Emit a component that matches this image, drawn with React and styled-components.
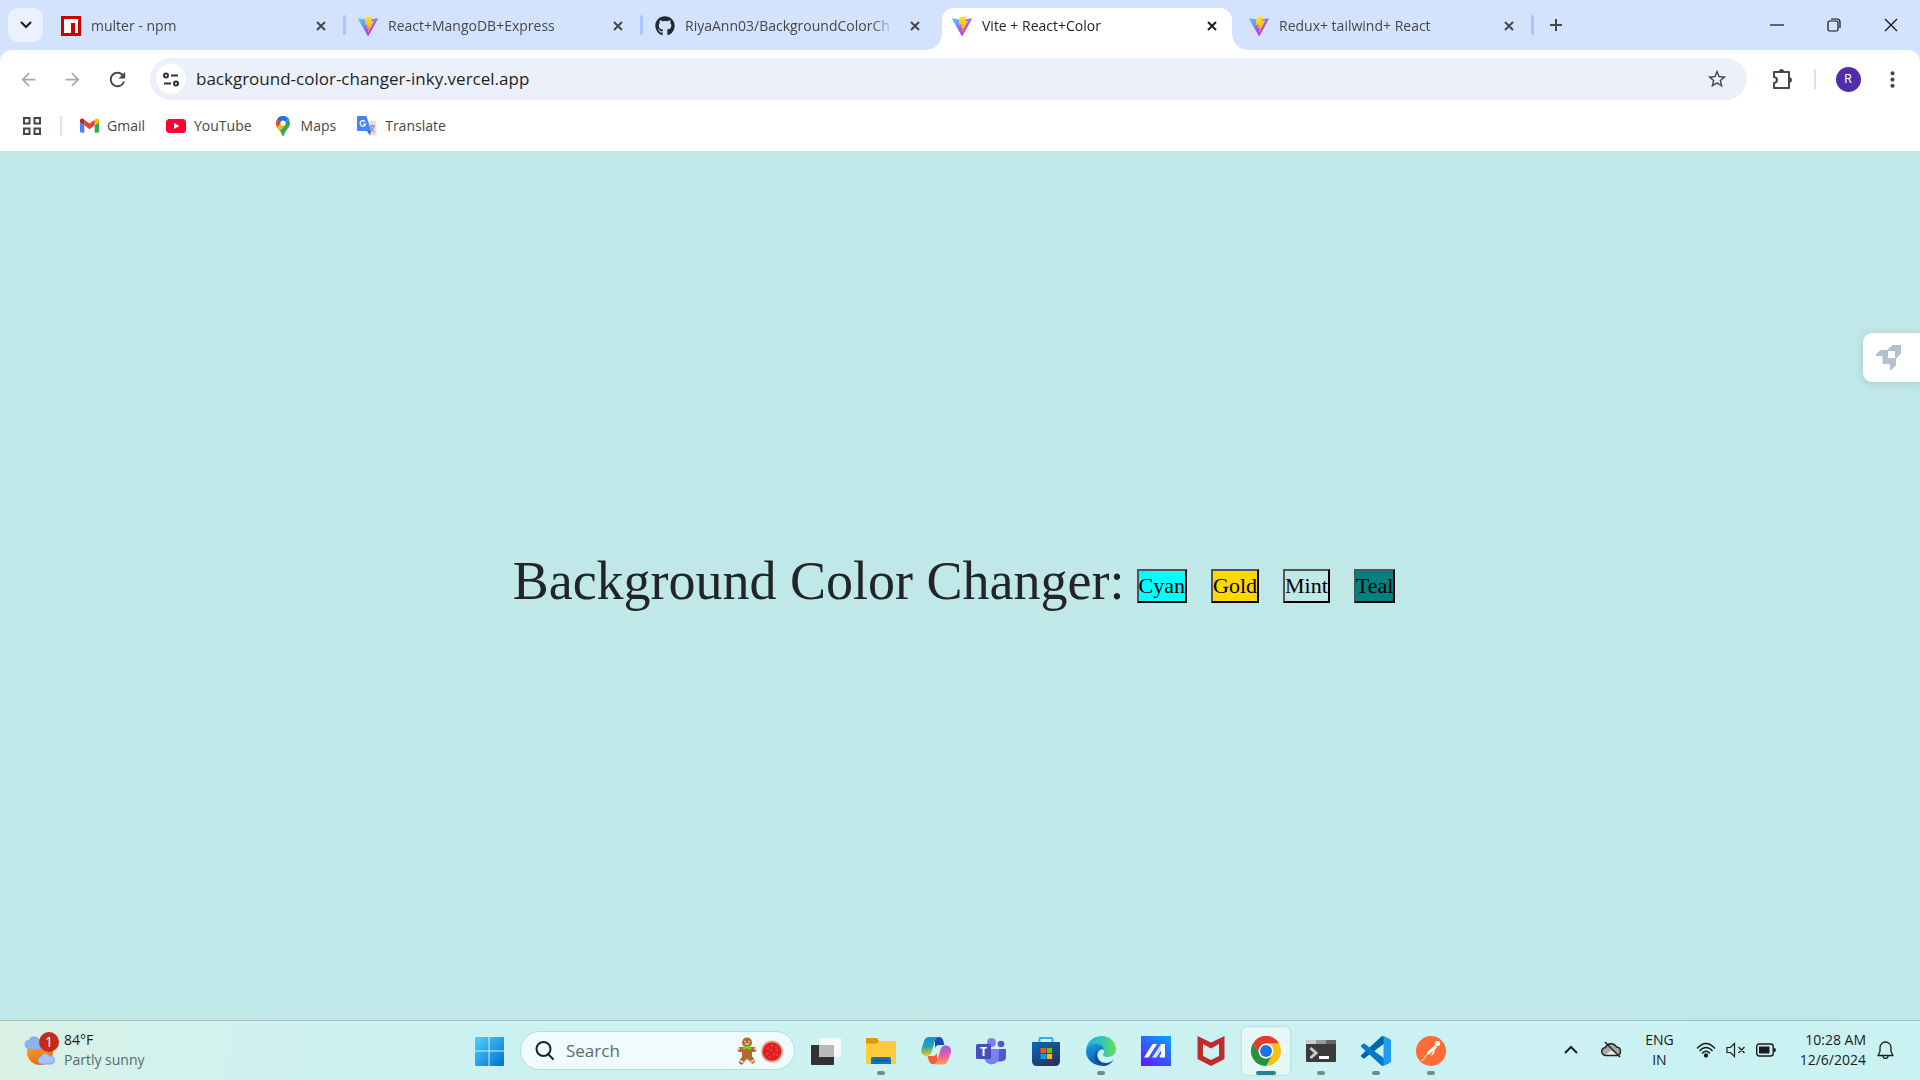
import React, { useId, useState } from "react";
import styled, { createGlobalStyle } from "styled-components";
import {
  MdArrowBack, MdArrowForward, MdRefresh, MdStarBorder, MdMoreVert,
} from "react-icons/md";
import { FaGithub } from "react-icons/fa";

const ui = `"Open Sans", "Noto Sans", sans-serif`;

const GlobalStyle = createGlobalStyle`
  *, *::before, *::after { box-sizing: border-box; }
  body { margin: 0; font-family: ${ui}; }
  button, input { font: inherit; color: inherit; }
  svg { display: block; flex: none; }
`;

const Screen = styled.div`
  display: flex;
  flex-direction: column;
  min-height: 100vh;
`;

/* ---------- browser frame ---------- */
const Browser = styled.header`
  background: #d3e3fd;
`;
const TabStrip = styled.div`
  display: flex;
  align-items: stretch;
  height: 50px;
  padding-left: 8px;
`;
const TabSearch = styled.button`
  width: 35px;
  height: 34px;
  margin: 8px 8px 0 0;
  border: 0;
  border-radius: 10px;
  background: #ebf1fe;
  display: grid;
  place-items: center;
  padding: 0;
`;
const Tab = styled.div`
  position: relative;
  display: flex;
  align-items: center;
  flex: 0 1 290px;
  min-width: 0;
  margin-top: 8px;
  padding: 0 10px 7px;
  gap: 10px;
  border-radius: 12px 12px 0 0;
  background: ${(p) => (p.$active ? "#fff" : "transparent")};
  color: ${(p) => (p.$active ? "#1f1f1f" : "#474747")};
  &::before, &::after {
    content: "";
    display: ${(p) => (p.$active ? "block" : "none")};
    position: absolute;
    bottom: 0;
    width: 15px;
    height: 15px;
  }
  &::before {
    right: 100%;
    background: radial-gradient(circle at 0 0, transparent 14px, #fff 15px);
  }
  &::after {
    left: 100%;
    background: radial-gradient(circle at 100% 0, transparent 14px, #fff 15px);
  }
`;
const TabTitle = styled.span`
  flex: 1;
  min-width: 0;
  overflow: hidden;
  white-space: nowrap;
  font-size: 14px;
  line-height: 20px;
  mask-image: linear-gradient(to right, #000 calc(100% - 24px), transparent);
`;
const Divider = styled.span`
  flex: none;
  align-self: center;
  width: 3px;
  height: 20px;
  margin: 0 2px;
  border-radius: 2px;
  background: ${(p) => (p.$hidden ? "transparent" : "#a8c7fa")};
`;
const IconButton = styled.button`
  flex: none;
  display: grid;
  place-items: center;
  width: ${(p) => p.$w || 20}px;
  height: ${(p) => p.$h || 20}px;
  padding: 0;
  border: 0;
  background: none;
  color: ${(p) => p.$color || "#474747"};
`;
const WindowControls = styled.div`
  display: flex;
  align-items: center;
  margin-left: auto;
`;
const Toolbar = styled.div`
  display: flex;
  align-items: center;
  height: 58px;
  padding: 0 6px;
  background: #fff;
  border-radius: 12px 12px 0 0;
`;
const Omnibox = styled.div`
  flex: 1;
  display: flex;
  align-items: center;
  height: 42px;
  margin: 0 13px 0 10px;
  padding: 0 18px 0 6px;
  border-radius: 21px;
  background: #ecf0fa;
`;
const SiteInfo = styled.button`
  display: grid;
  place-items: center;
  width: 30px;
  height: 30px;
  padding: 0;
  border: 0;
  border-radius: 50%;
  background: #fff;
`;
const Address = styled.input`
  flex: 1;
  min-width: 0;
  margin-left: 10px;
  padding: 0;
  border: 0;
  background: none;
  font-size: 17px;
  line-height: 24px;
  color: #1f1f1f;
`;
const ToolDivider = styled.span`
  width: 2px;
  height: 20px;
  background: #d3e3fd;
  margin: 0 ${(p) => p.$gap}px;
`;
const Avatar = styled.button`
  width: 25px;
  height: 25px;
  padding: 0;
  border: 0;
  border-radius: 50%;
  background: #512da8;
  color: #fff;
  font: 12px/25px Roboto, sans-serif;
`;
const Bookmarks = styled.nav`
  display: flex;
  align-items: center;
  height: 43px;
  padding: 0 22px 8px;
  background: #fff;
`;
const Bookmark = styled.a`
  display: flex;
  align-items: center;
  gap: 8px;
  margin-right: 21px;
  color: #474747;
  font-size: 14px;
  line-height: 20px;
  text-decoration: none;
`;

/* ---------- page ---------- */
const Page = styled.main`
  position: relative;
  flex: 1;
  display: flex;
  align-items: center;
  justify-content: center;
  background: ${(p) => p.$color};
  font-family: "Liberation Serif", serif;
`;
const Picker = styled.section`
  display: flex;
  align-items: center;
`;
const Heading = styled.h1`
  margin: 0;
  padding-bottom: 10px;
  font-size: 54px;
  line-height: 64px;
  font-weight: 400;
  color: #212529;
`;
const Swatch = styled.button`
  margin: 0 12px;
  padding: 0;
  border: 2px outset #000;
  background: ${(p) => p.$color};
  color: #000;
  font-size: 22px;
  line-height: 30px;
`;
const SideWidget = styled.button`
  position: absolute;
  right: 0;
  top: 182px;
  display: flex;
  align-items: center;
  width: 57px;
  height: 49px;
  padding: 0 13px;
  border: 0;
  border-radius: 9px 0 0 9px;
  background: #fff;
  box-shadow: 0 1px 8px rgba(60, 90, 110, 0.2);
`;

/* ---------- taskbar ---------- */
const Taskbar = styled.footer`
  display: grid;
  grid-template-columns: 1fr auto 1fr;
  align-items: center;
  height: 60px;
  border-top: 1px solid #a6bdc2;
  background: linear-gradient(100deg, #dbf1e4 0, #d2f2ec 160px, #cbf2f1 420px, #ccf1f2 70%, #caf2f2 100%);
  color: #1b1b1b;
`;
const Weather = styled.button`
  display: flex;
  align-items: center;
  gap: 4px;
  justify-self: start;
  margin-left: 24px;
  padding: 0 0 2px;
  border: 0;
  background: none;
  text-align: left;
`;
const SmallText = styled.span`
  display: block;
  font-size: 14px;
  line-height: 20px;
  white-space: nowrap;
  color: ${(p) => (p.$muted ? "#58696b" : "#1b1b1b")};
`;
const Apps = styled.div`
  display: flex;
  align-items: center;
  gap: 7px;
`;
const AppButton = styled.button`
  display: flex;
  flex-direction: column;
  align-items: center;
  justify-content: space-between;
  width: 48px;
  height: 48px;
  padding: 9px 0 0;
  border: 0;
  border-radius: 5px;
  background: ${(p) => (p.$active ? "#e6f7f8" : "none")};
  box-shadow: ${(p) => (p.$active ? "0 0 1px 1px rgba(120,170,170,0.2)" : "none")};
  &::after {
    content: "";
    width: ${(p) => (p.$active ? 20 : 8)}px;
    height: 4px;
    border-radius: 2px;
    background: ${(p) => (p.$active ? "#24848f" : p.$running ? "#76898b" : "transparent")};
  }
`;
const SearchBox = styled.label`
  display: flex;
  align-items: center;
  width: 275px;
  height: 39px;
  padding: 0 11px 0 14px;
  border: 1px solid #b5dcdc;
  border-radius: 20px;
  background: #effbfc;
`;
const SearchInput = styled.input`
  flex: 1;
  min-width: 0;
  margin-left: 12px;
  padding: 0;
  border: 0;
  background: none;
  font-size: 17px;
  line-height: 24px;
  &::placeholder { color: #5c6b6c; opacity: 1; }
`;
const Tray = styled.div`
  display: flex;
  align-items: center;
  justify-self: end;
  padding: 0 26px 2px 0;
`;
const TrayButton = styled.button`
  display: flex;
  align-items: center;
  gap: ${(p) => p.$gap || 0}px;
  margin-left: ${(p) => p.$before || 0}px;
  padding: 0;
  border: 0;
  background: none;
`;
const TrayText = styled(TrayButton)`
  display: block;
  text-align: ${(p) => p.$align};
`;

/* ---------- drawings ---------- */
const Vite = () => {
  const id = useId();
  return (
    <svg width="20" height="20" viewBox="0 0 256 257" aria-hidden="true">
      <defs>
        <linearGradient id={id + "a"} x1="0" x2=".58" y1=".08" y2=".79">
          <stop offset="0" stopColor="#41d1ff" /><stop offset="1" stopColor="#bd34fe" />
        </linearGradient>
        <linearGradient id={id + "b"} x1=".43" x2=".5" y1=".02" y2=".89">
          <stop offset="0" stopColor="#ffea83" /><stop offset=".08" stopColor="#ffdd35" /><stop offset="1" stopColor="#ffa800" />
        </linearGradient>
      </defs>
      <path fill={`url(#${id}a)`} d="M255.153 37.938L134.897 252.976c-2.483 4.44-8.862 4.466-11.382.048L.875 37.958c-2.746-4.814 1.371-10.646 6.827-9.67l120.385 21.517a6.537 6.537 0 0 0 2.322-.004l117.867-21.483c5.438-.991 9.574 4.796 6.877 9.62Z" />
      <path fill={`url(#${id}b)`} d="M185.432.063L96.44 17.501a3.268 3.268 0 0 0-2.634 3.014l-5.474 92.456a3.268 3.268 0 0 0 3.997 3.378l24.777-5.718c2.318-.535 4.413 1.507 3.936 3.838l-7.361 36.047c-.495 2.426 1.782 4.5 4.151 3.78l15.304-4.649c2.372-.72 4.652 1.36 4.15 3.788l-11.698 56.621c-.732 3.542 3.979 5.473 5.943 2.437l1.313-2.028l72.516-144.72c1.215-2.423-.88-5.186-3.54-4.672l-25.505 4.922c-2.396.462-4.435-1.77-3.759-4.114l16.646-57.705c.677-2.35-1.37-4.583-3.769-4.113Z" />
    </svg>
  );
};
const Npm = () => (
  <svg width="20" height="20" viewBox="0 0 20 20" aria-hidden="true">
    <path fill="#cb0000" d="M0 0h20v20H0z" /><path fill="#fff" d="M3 3h14v14h-3V7h-4v10H3z" />
  </svg>
);
const Cross = ({ color = "#474747", size = 10, width = 2 }) => (
  <svg width={size} height={size} viewBox={`0 0 ${size} ${size}`} aria-hidden="true">
    <path d={`M1 1L${size - 1} ${size - 1}M${size - 1} 1L1 ${size - 1}`} stroke={color} strokeWidth={width} />
  </svg>
);
const Gmail = () => (
  <svg width="19" height="15" viewBox="52 42 88 66" aria-hidden="true">
    <path fill="#4285f4" d="M58 108h14V74L52 59v43c0 3.3 2.7 6 6 6" />
    <path fill="#34a853" d="M120 108h14c3.3 0 6-2.7 6-6V59l-20 15" />
    <path fill="#fbbc04" d="M120 48v26l20-15v-8c0-7.4-8.5-11.6-14.4-7.2" />
    <path fill="#ea4335" d="M72 74V48l24 18 24-18v26L96 92" />
    <path fill="#c5221f" d="M52 51v8l20 15V48l-5.6-4.2C60.500 39.400 52 43.600 52 51" />
  </svg>
);
const YouTube = () => (
  <svg width="20" height="14" viewBox="0 0 20 14" aria-hidden="true">
    <rect width="20" height="14" rx="3.500" fill="#ff0033" /><path fill="#fff" d="M8 4l5.300 3L8 10z" />
  </svg>
);
const Maps = () => {
  const id = useId();
  return (
    <svg width="20" height="20" viewBox="-3 0 20 20" aria-hidden="true">
      <clipPath id={id}><path d="M7 0a7 7 0 0 1 7 7c0 5-4.500 6.500-6 12.200q-1 1.600-2 0C4.500 13.500 0 12 0 7a7 7 0 0 1 7-7z" /></clipPath>
      <g clipPath={`url(#${id})`}>
        <path fill="#34a853" d="M0 0h14v20H0z" />
        <path fill="#fbbc04" d="M0 12L12 2l-5 8-5 6-2-1z" />
        <path fill="#ea4335" d="M-2 8L4 0 7 6 1 12z" />
        <path fill="#1a73e8" d="M1 2L3-1h10v5L7 9 5 6z" />
        <path fill="#4285f4" d="M6 9l6-7h3L5 14z" />
        <path fill="#fbbc04" d="M1 11.300L5 7l4 2.500-5.500 6z" />
      </g>
      <circle cx="7" cy="7" r="2.600" fill="#fff" />
    </svg>
  );
};
const Translate = () => (
  <svg width="20" height="20" viewBox="0 0 20 20" aria-hidden="true">
    <path fill="#dfe1e5" d="M8 5h10.500a1 1 0 0 1 1 1v12.500a1 1 0 0 1-1 1H13z" />
    <path fill="#4285f4" d="M1 0h8.500L14 15H1a1 1 0 0 1-1-1V1a1 1 0 0 1 1-1z" />
    <path fill="#3367d6" d="M10 15h4l-1 4.500z" />
    <path d="M8 5.500A2.800 2.800 0 1 0 8.600 8H6" fill="none" stroke="#fff" strokeWidth="1.200" />
    <path d="M12.500 10h5.500M15.200 8.500V10M13.500 11q2 4 4 5M17 10.500q-1 3.500-4 5.500" fill="none" stroke="#6b7f86" strokeWidth="1" />
  </svg>
);
const Grid = () => (
  <svg width="18" height="18" viewBox="0 0 18 18" fill="none" stroke="#474747" strokeWidth="2" aria-hidden="true">
    <path d="M1 1h5.500v5.500H1zM11.500 1H17v5.500h-5.500zM1 11.500h5.500V17H1zM11.500 11.500H17V17h-5.500z" />
  </svg>
);
const Tune = () => (
  <svg width="16" height="15" viewBox="0 0 16 15" fill="none" stroke="#333" strokeWidth="2" aria-hidden="true">
    <circle cx="3" cy="3.500" r="2" /><path d="M8 3.500h7M1 11.500h7" /><circle cx="13" cy="11.500" r="2" />
  </svg>
);
const Puzzle = () => (
  <svg width="21" height="21" viewBox="0 0 21 21" aria-hidden="true">
    <path d="M2 3h15v16H2v-5q3-.5 3-3T2 8z" fill="none" stroke="#474747" strokeWidth="2" strokeLinejoin="round" />
    <path d="M7 3a2.500 2.500 0 0 1 5 0zM17 8.500a2.500 2.500 0 0 1 0 5z" fill="#474747" stroke="#474747" />
  </svg>
);
const Rocket = () => (
  <svg width="25" height="25" viewBox="0 0 25 25" aria-hidden="true">
    <path fill="#b3c0ce" fillRule="evenodd" d="M16.500 0H25v8.500L20 14v6l-4.500 5h-1.500v-6H6.500v-8H0V9l4.500-4H11zM12 6v7h7V6z" />
  </svg>
);
const WeatherIcon = () => (
  <svg width="36" height="36" viewBox="0 0 36 36" aria-hidden="true">
    <defs><linearGradient id="sun" x2=".3" y2="1"><stop stopColor="#f8b62d" /><stop offset="1" stopColor="#ee6b0b" /></linearGradient></defs>
    <circle cx="16" cy="20" r="13" fill="url(#sun)" />
    <path fill="#8db0ee" d="M5 17a4.500 4.500 0 0 1 0-9 5.500 5.500 0 0 1 10-1l3 10z" />
    <path fill="#a5c4f8" stroke="#7d9fe0" d="M17 32a3.800 3.800 0 0 1 0-7.500 4.500 4.500 0 0 1 8.500-.5 4 4 0 1 1 1.500 8z" />
    <circle cx="25" cy="10" r="10" fill="#c42b1c" />
    <text x="25" y="15" fill="#fff" fontSize="14" textAnchor="middle">1</text>
  </svg>
);
const Windows = () => (
  <svg width="30" height="30" viewBox="0 0 30 30" aria-hidden="true">
    <defs><linearGradient id="win" x2="1" y2="1"><stop stopColor="#4fd2fd" /><stop offset="1" stopColor="#006fd0" /></linearGradient></defs>
    <path fill="url(#win)" d="M2 1h12.500v13.500H1V2q0-1 1-1zM15.500 1H29q1 0 1 1v12.500H15.500zM1 15.500h13.500V30H2q-1 0-1-1zM15.500 15.500H30V29q0 1-1 1H15.500z" />
  </svg>
);
const Magnifier = () => (
  <svg width="19" height="19" viewBox="0 0 19 19" fill="none" stroke="#222" strokeWidth="2" aria-hidden="true">
    <circle cx="8.500" cy="8" r="7" /><path d="M13 13l5 5" strokeLinecap="round" />
  </svg>
);
const Treats = () => (
  <svg width="47" height="28" viewBox="0 0 47 28" aria-hidden="true">
    <g stroke="#b06a2c" strokeWidth="5" strokeLinecap="round"><path d="M4 12.500h14M11 12v8M10 18l-4.500 7M12 18l4.500 6" /></g>
    <path fill="#b06a2c" d="M6 11h10v9H6z" /><circle cx="11" cy="5.500" r="5" fill="#b06a2c" />
    <path d="M1.500 13l2-2M18.500 11l2 2M3.500 23.500l4 2M14.500 25l4-2" stroke="#f1e3d2" strokeWidth="1.500" />
    <path fill="#7ad321" d="M7 8l4 1.500L15 8v5l-4-1.500L7 13z" /><circle cx="11" cy="15.500" r="1" fill="#e5482a" /><circle cx="11" cy="19" r="1" fill="#e5482a" />
    <path d="M9 6.500q2 1.500 4 0" stroke="#fff" fill="none" /><circle cx="9" cy="4.500" r=".7" fill="#fff" /><circle cx="13" cy="4.500" r=".7" fill="#fff" />
    <circle cx="36" cy="14.500" r="11" fill="#e3a287" /><circle cx="36" cy="14.500" r="9.300" fill="#e31c25" />
    <g fill="#f8b9a9"><circle cx="32" cy="11" r=".6" /><circle cx="38" cy="17" r=".6" /><circle cx="36" cy="8.500" r=".6" /><circle cx="31" cy="17" r=".6" /><circle cx="41" cy="13" r=".6" /></g>
    <g fill="#6faa3a"><circle cx="35" cy="13" r=".8" /><circle cx="40" cy="10" r=".8" /><circle cx="34" cy="20" r=".8" /><circle cx="41" cy="18" r=".8" /></g>
  </svg>
);
const TaskView = () => (
  <svg width="30" height="30" viewBox="0 0 30 30" aria-hidden="true">
    <rect x="0" y="9" width="23" height="20" rx="1" fill="#323231" /><rect x="8" y="2" width="22" height="19" rx="1" fill="#f8fafa" />
    <path fill="#b9bbbb" d="M8 9h15v12H8z" />
  </svg>
);
const Folder = () => (
  <svg width="30" height="30" viewBox="0 0 30 30" aria-hidden="true">
    <path fill="#df9b03" d="M0 3q0-1 1-1h10l2 3v5H0z" /><path fill="#ffca3b" d="M0 7.500h11L13 5h17v22.500q0 .5-1 .5H1q-1 0-1-1z" />
    <path fill="#0b71c9" d="M5 23q0-2 2-2h16q2 0 2 2v5H5z" /><path d="M9 24.500h12" stroke="#064a8c" />
  </svg>
);
const Copilot = () => (
  <svg width="30" height="30" viewBox="0 0 30 30" aria-hidden="true">
    <defs>
      <linearGradient id="cp1" x2="0" y2="1"><stop stopColor="#1b8be5" /><stop offset=".5" stopColor="#23a9b5" /><stop offset="1" stopColor="#f2c811" /></linearGradient>
      <linearGradient id="cp2" x2="0" y2="1"><stop stopColor="#a056f0" /><stop offset=".55" stopColor="#f0609a" /><stop offset="1" stopColor="#fda04e" /></linearGradient>
    </defs>
    <path fill="#1d49b8" d="M14 1h4q3 0 4 3l1.500 5H18q-3 0-4 3z" />
    <path fill="#f4603c" d="M16 28h-4q-3 0-4-3l-1.500-5H12q3 0 4-3z" />
    <path fill="url(#cp1)" d="M8 1h9.500q-3 1-4 5l-3 10q-1.500 4-5 4-6 0-5-7L3 5q1.500-4 5-4z" />
    <path fill="url(#cp2)" d="M22 28.500h-9.500q3-1 4-5l3-10q1.500-4 5-4 6 0 5.500 6.500l-3 8.500q-1.500 4-5 4z" />
  </svg>
);
const Teams = () => (
  <svg width="30" height="30" viewBox="0 0 30 30" aria-hidden="true">
    <circle cx="25" cy="8" r="3.300" fill="#5059c9" /><path fill="#5059c9" d="M20 13h10v8q0 4-5 4.500h-5z" />
    <circle cx="15.500" cy="6.500" r="4.500" fill="#7b83eb" /><path fill="#7b83eb" d="M8 13h15v8q0 7-7.500 7.500Q9 28 8 21z" />
    <rect y="8" width="15" height="15" rx="1.500" fill="#464eb8" /><text x="7.500" y="20" fontSize="12" fontWeight="700" fill="#fff" textAnchor="middle">T</text>
  </svg>
);
const Store = () => (
  <svg width="30" height="30" viewBox="0 0 30 30" aria-hidden="true">
    <defs><linearGradient id="store" x2=".6" y2="1"><stop stopColor="#0669bd" /><stop offset="1" stopColor="#26355c" /></linearGradient></defs>
    <path d="M8.500 7V3q0-1 1-1h11q1 0 1 1v4" fill="none" stroke="#22b8ec" strokeWidth="2" />
    <path fill="url(#store)" d="M1 6h28v19q0 5-5 5H6q-5 0-5-5z" />
    <path fill="#f25022" d="M9.500 12H15v5H9.500z" /><path fill="#7fba00" d="M15.800 12h5.300v5h-5.300z" /><path fill="#00a4ef" d="M9.500 18H15v5H9.500z" /><path fill="#ffb900" d="M15.800 18h5.300v5h-5.300z" />
  </svg>
);
const Edge = () => (
  <svg width="30" height="30" viewBox="0 0 30 30" aria-hidden="true">
    <defs>
      <linearGradient id="ed1"><stop stopColor="#2aaee0" /><stop offset=".5" stopColor="#32c3bd" /><stop offset="1" stopColor="#66e14c" /></linearGradient>
      <linearGradient id="ed2" x2=".4" y2="1"><stop stopColor="#1b9de2" /><stop offset="1" stopColor="#0a58ad" /></linearGradient>
    </defs>
    <path fill="url(#ed1)" d="M0 14C1 5 8 0 15.500 0 24 0 30 6 30 13c0 5-3.500 8-8 8-4 0-5.500-1.500-5-3 2-1.500 1.500-7-4-8C8 9.500 2 11 0 14z" />
    <path fill="url(#ed2)" d="M0 15c1-5 6-7.500 11-7 4 .3 7 3 7 6-4-2-8 3-6 8s6 7 10 6.500C15 32 0 28 0 15z" />
    <path fill="#0f4f96" d="M12.500 13c-4 5-1 14 7 14 4 0 6-1.500 8-3.500-2 4-6 6.500-10 6.500C9 29 6 19 12.500 13z" />
  </svg>
);
const MyAsus = () => (
  <svg width="30" height="30" viewBox="0 0 30 30" aria-hidden="true">
    <defs><linearGradient id="asus" x1=".8" y1="0" x2=".1" y2="1"><stop stopColor="#0a9bff" /><stop offset="1" stopColor="#5b1cff" /></linearGradient></defs>
    <path fill="url(#asus)" d="M0 0h30v30H0z" />
    <path fill="#fff" d="M11.500 8h4.500L7.500 21.500H3z" /><path fill="#d7defd" d="M20 8L11 21.500h4.500L21 13z" /><path fill="#fff" d="M20 8h4v13.500h-4z" /><circle cx="20" cy="20" r="1.500" fill="#fff" />
  </svg>
);
const McAfee = () => (
  <svg width="30" height="30" viewBox="0 0 30 30" aria-hidden="true">
    <path fill="#c02b2c" d="M1.500 0L15 6.500 28.500 0v23L15 30 1.500 23zM7 8v12l8 4 8-4V8l-8 4.500z" fillRule="evenodd" />
  </svg>
);
const Chrome = () => (
  <svg width="30" height="30" viewBox="0 0 48 48" aria-hidden="true">
    <circle cx="24" cy="24" r="24" fill="#fbc116" />
    <path fill="#e33b2e" d="M3.200 12A24 24 0 0 1 44.800 12H24L13.600 30z" />
    <path fill="#229342" d="M3.200 12a24 24 0 0 0 20.800 36l10.400-18a12 12 0 0 1-20.800 0z" />
    <path fill="#fbc116" d="M44.800 12H24a12 12 0 0 1 10.400 18L24 48z" />
    <circle cx="24" cy="24" r="12" fill="#fff" /><circle cx="24" cy="24" r="9.500" fill="#1a73e8" />
  </svg>
);
const Terminal = () => (
  <svg width="30" height="30" viewBox="0 0 30 30" aria-hidden="true">
    <path fill="#3b3b3b" d="M0 5q0-1 1-1h28q1 0 1 1v20q0 1-1 1H1q-1 0-1-1z" /><path fill="#ccc" d="M0 8V5q0-1 1-1h9v4z" /><path fill="#999" d="M10 4h10v4H10z" /><path fill="#666" d="M20 4h9q1 0 1 1v3H20z" />
    <path d="M4.500 12l5.500 5-5.500 5" fill="none" stroke="#ccc" strokeWidth="3" /><path fill="#fff" d="M13 20h10v3H13z" />
  </svg>
);
const VsCode = () => (
  <svg width="30" height="30" viewBox="0 0 100 100" aria-hidden="true">
    <path fill="#0065a9" d="M96 11L75 1c-3-1-5-.5-7 1L1 63c-1.500 2-1.500 4 0 6l6 5c1.500 1.500 4 1.500 5 .5L92 14z" />
    <path fill="#007acc" d="M96 89L75 99c-3 1-5 .5-7-1L1 37c-1.500-2-1.500-4 0-6l6-5c1.500-1.500 4-1.500 5-.5L92 86z" />
    <path fill="#1f9cf0" d="M75 99c-3 1-5 .5-7-1 2.500 2.500 7 .5 7-3V5c0-3.500-4.500-5.500-7-3 2-1.500 4-2 7-1l21 10c3 1.500 4 3 4 6v66c0 3-1 4.500-4 6z" />
  </svg>
);
const Postman = () => (
  <svg width="30" height="30" viewBox="0 0 30 30" aria-hidden="true">
    <circle cx="15" cy="15" r="15" fill="#ff6c37" /><circle cx="21.500" cy="7.500" r="2.600" fill="#fff" />
    <path d="M19 9.500L11 17l1.500 1.500 8-7zM11 18.500L6 25M18.500 12.500l-1 5-2.500 2" fill="#fff" stroke="#fff" strokeWidth="1" />
  </svg>
);
const ChevronUp = () => (
  <svg width="14" height="9" viewBox="0 0 14 9" fill="none" stroke="#1b1b1b" strokeWidth="2" aria-hidden="true"><path d="M1 8l6-6 6 6" /></svg>
);
const CloudOff = () => (
  <svg width="21" height="17" viewBox="0 0 21 17" aria-hidden="true">
    <path d="M5 14.500a4 4 0 0 1-.5-8 6 6 0 0 1 11-.5 4.300 4.300 0 0 1 .5 8.500z" fill="#a8aaaa" stroke="#222" strokeWidth="1.500" /><path fill="#e8eaea" d="M5 13.500l5-4 7 4z" />
    <path d="M4 1l15 15" stroke="#222" strokeWidth="1.500" />
  </svg>
);
const Wifi = () => (
  <svg width="20" height="16" viewBox="0 0 20 16" fill="none" stroke="#1b1b1b" strokeWidth="1.300" aria-hidden="true">
    <path d="M1 6.500q9-10 18 0M3.500 9q6.500-7 13 0M6 11.500q4-4.500 8 0" /><circle cx="10" cy="13.500" r="1.500" fill="#1b1b1b" />
  </svg>
);
const Muted = () => (
  <svg width="20" height="16" viewBox="0 0 20 16" fill="none" stroke="#1b1b1b" strokeWidth="1.200" aria-hidden="true">
    <path d="M1 5.500h3.500L8.500 1.500v13l-4-4H1zM12.500 5l6 6M18.500 5l-6 6" />
  </svg>
);
const Battery = () => (
  <svg width="20" height="14" viewBox="0 0 20 14" aria-hidden="true">
    <rect x=".7" y="1" width="16.500" height="12" rx="2.500" fill="none" stroke="#1b1b1b" strokeWidth="1.400" /><path fill="#1b1b1b" d="M3 3.500h10.500v7H3zM18 5q2 0 2 2t-2 2z" />
  </svg>
);
const Bell = () => (
  <svg width="17" height="18" viewBox="0 0 17 18" fill="none" stroke="#1b1b1b" strokeWidth="1.300" aria-hidden="true">
    <path d="M1 14.500l2-4V6.500a5.500 5.500 0 0 1 11 0v4l2 4zM6 15a2.500 2.500 0 0 0 5 0" strokeLinejoin="round" />
  </svg>
);

const tabs = [
  { title: "multer - npm", icon: <Npm /> },
  { title: "React+MangoDB+Express", icon: <Vite /> },
  { title: "RiyaAnn03/BackgroundColorCh", icon: <FaGithub size={20} color="#24292f" />, fused: true },
  { title: "Vite + React+Color", icon: <Vite />, active: true, fused: true },
  { title: "Redux+ tailwind+ React", icon: <Vite /> },
];
const bookmarks = [
  { name: "Gmail", icon: <Gmail /> },
  { name: "YouTube", icon: <YouTube /> },
  { name: "Maps", icon: <Maps /> },
  { name: "Translate", icon: <Translate /> },
];
const swatches = [
  { name: "Cyan", color: "#00ffff" },
  { name: "Gold", color: "#ffd700" },
  { name: "Mint", color: "#c1e8e8" },
  { name: "Teal", color: "#008080" },
];
const apps = [
  { name: "Task view", icon: <TaskView /> },
  { name: "File Explorer", icon: <Folder />, running: true },
  { name: "Copilot", icon: <Copilot /> },
  { name: "Teams", icon: <Teams /> },
  { name: "Microsoft Store", icon: <Store /> },
  { name: "Edge", icon: <Edge />, running: true },
  { name: "MyASUS", icon: <MyAsus /> },
  { name: "McAfee", icon: <McAfee /> },
  { name: "Chrome", icon: <Chrome />, running: true, active: true },
  { name: "Terminal", icon: <Terminal />, running: true },
  { name: "Visual Studio Code", icon: <VsCode />, running: true },
  { name: "Postman", icon: <Postman />, running: true },
];

export default function App() {
  const [color, setColor] = useState("#c1e8e8");
  return (
    <Screen>
      <GlobalStyle />
      <Browser>
        <TabStrip>
          <TabSearch aria-label="Search tabs">
            <svg width="12" height="8" viewBox="0 0 12 8" fill="none" stroke="#1f1f1f" strokeWidth="2.200"><path d="M1 1l5 5 5-5" /></svg>
          </TabSearch>
          {tabs.map((t) => (
            <React.Fragment key={t.title}>
              <Tab $active={t.active}>
                {t.icon}
                <TabTitle>{t.title}</TabTitle>
                <IconButton aria-label={`Close ${t.title}`}><Cross color={t.active ? "#1f1f1f" : "#474747"} /></IconButton>
              </Tab>
              <Divider $hidden={t.fused} />
            </React.Fragment>
          ))}
          <IconButton $w={40} $h={50} aria-label="New tab">
            <svg width="14" height="14" viewBox="0 0 14 14"><path d="M7 1v12M1 7h12" stroke="#474747" strokeWidth="2" /></svg>
          </IconButton>
          <WindowControls>
            <IconButton $w={56} $h={48} aria-label="Minimize"><svg width="14" height="2"><path d="M0 1h14" stroke="#111" strokeWidth="1.200" /></svg></IconButton>
            <IconButton $w={57} $h={48} aria-label="Restore">
              <svg width="14" height="14" viewBox="0 0 14 14" fill="none" stroke="#111" strokeWidth="1.200"><rect x="1" y="3" width="10" height="10" rx="1.500" /><path d="M4 1h6q3 0 3 3v6" /></svg>
            </IconButton>
            <IconButton $w={58} $h={48} aria-label="Close window"><Cross color="#111" size={14} width={1.2} /></IconButton>
          </WindowControls>
        </TabStrip>
        <Toolbar>
          <IconButton $w={44} $h={42} $color="#a9a9a9" aria-label="Back"><MdArrowBack size={21} /></IconButton>
          <IconButton $w={45} $h={42} $color="#a9a9a9" aria-label="Forward"><MdArrowForward size={21} /></IconButton>
          <IconButton $w={45} $h={42} aria-label="Reload"><MdRefresh size={23} /></IconButton>
          <Omnibox>
            <SiteInfo aria-label="Site information"><Tune /></SiteInfo>
            <Address aria-label="Address" defaultValue="background-color-changer-inky.vercel.app" />
            <IconButton aria-label="Bookmark this tab" $w={24} $h={24}><MdStarBorder size={22} /></IconButton>
          </Omnibox>
          <IconButton $w={44} $h={42} aria-label="Extensions"><Puzzle /></IconButton>
          <ToolDivider $gap={10} />
          <IconButton as="div" $w={44} $h={42}><Avatar aria-label="Profile">R</Avatar></IconButton>
          <IconButton $w={44} $h={42} aria-label="Menu"><MdMoreVert size={25} /></IconButton>
        </Toolbar>
        <Bookmarks>
          <IconButton aria-label="Apps"><Grid /></IconButton>
          <ToolDivider $gap={18} />
          {bookmarks.map((b) => (
            <Bookmark key={b.name} href="#">{b.icon}{b.name}</Bookmark>
          ))}
        </Bookmarks>
      </Browser>
      <Page $color={color}>
        <Picker>
          <Heading>Background Color Changer:</Heading>
          {swatches.map((s) => (
            <Swatch key={s.name} $color={s.color} onClick={() => setColor(s.color)}>{s.name}</Swatch>
          ))}
        </Picker>
        <SideWidget aria-label="Launch"><Rocket /></SideWidget>
      </Page>
      <Taskbar>
        <Weather>
          <WeatherIcon />
          <span><SmallText>84°F</SmallText><SmallText $muted>Partly sunny</SmallText></span>
        </Weather>
        <Apps>
          <AppButton aria-label="Start"><Windows /></AppButton>
          <SearchBox>
            <Magnifier />
            <SearchInput aria-label="Search" placeholder="Search" />
            <Treats />
          </SearchBox>
          {apps.map((a) => (
            <AppButton key={a.name} aria-label={a.name} $running={a.running} $active={a.active}>{a.icon}</AppButton>
          ))}
        </Apps>
        <Tray>
          <TrayButton aria-label="Hidden icons"><ChevronUp /></TrayButton>
          <TrayButton $before={23} aria-label="Cloud status"><CloudOff /></TrayButton>
          <TrayText $before={23} $align="center"><SmallText>ENG</SmallText><SmallText>IN</SmallText></TrayText>
          <TrayButton $before={22} $gap={10} aria-label="Network, sound, battery"><Wifi /><Muted /><Battery /></TrayButton>
          <TrayText $before={24} $align="right"><SmallText>10:28 AM</SmallText><SmallText>12/6/2024</SmallText></TrayText>
          <TrayButton $before={11} aria-label="Notifications"><Bell /></TrayButton>
        </Tray>
      </Taskbar>
    </Screen>
  );
}
